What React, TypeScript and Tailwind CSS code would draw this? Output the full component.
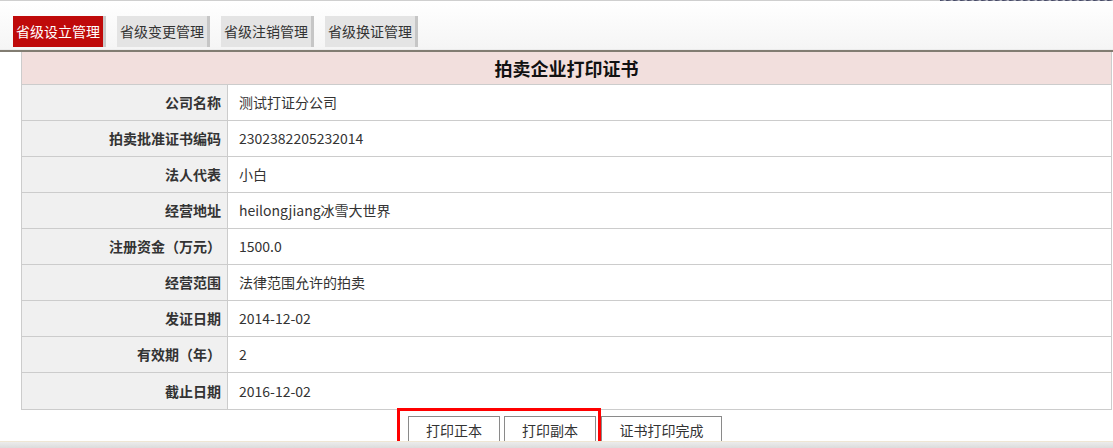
const tabs = ['省级设立管理', '省级变更管理', '省级注销管理', '省级换证管理'];

const rows: [string, string][] = [
  ['公司名称', '测试打证分公司'],
  ['拍卖批准证书编码', '2302382205232014'],
  ['法人代表', '小白'],
  ['经营地址', 'heilongjiang冰雪大世界'],
  ['注册资金（万元）', '1500.0'],
  ['经营范围', '法律范围允许的拍卖'],
  ['发证日期', '2014-12-02'],
  ['有效期（年）', '2'],
  ['截止日期', '2016-12-02'],
];

export default function App() {
  return (
    <div className="w-[1113px] h-[448px] overflow-hidden bg-white text-[#333] font-['Microsoft_YaHei','Noto_Sans_CJK_SC',sans-serif]">
      <div className="h-[441px] overflow-hidden relative">
        {/* top strip */}
        <div className="flex h-px">
          <div className="w-[940px] bg-[#cfcfcf]" />
          <div className="flex-1 bg-[repeating-linear-gradient(90deg,#3d4160_0px,#6b6e84_3px,#c9cad3_5px,#2f3350_7px)]" />
        </div>

        {/* tabs */}
        <div className="h-[49px] bg-gradient-to-b from-white to-[#f5f5f5] border-b border-[#ececec] flex gap-[11px] pl-[13px] pt-[15px]">
          {tabs.map((t, i) => (
            <div
              key={t}
              className={
                'h-[31px] w-[93px] flex items-center pl-[3px] text-[14px] border-r-[3px] ' +
                (i === 0
                  ? 'bg-[#bf0a0a] text-white border-[#cacaca]'
                  : 'bg-[#e4e4e4] text-[#333] border-[#c6c6c6]')
              }
            >
              {t}
            </div>
          ))}
        </div>
        <div className="h-[2px] bg-[#827d72]" />

        {/* table */}
        <div className="ml-[21px] w-[1091px] border-x border-b border-[#cccccc]">
          <div className="h-[33px] bg-[#f2dfdd] border-b border-[#cccccc] flex items-center justify-center text-[18px] font-bold text-[#111]">
            拍卖企业打印证书
          </div>
          {rows.map(([label, value], i) => (
            <div
              key={label}
              className={'flex h-[36px] ' + (i < rows.length - 1 ? 'border-b border-[#cccccc]' : '')}
            >
              <div className="w-[206px] shrink-0 bg-[#f0f0f0] border-r border-[#cccccc] flex items-center justify-end pr-[6px] text-[14px] font-bold text-[#333]">
                {label}
              </div>
              <div className="flex items-center pl-[11px] text-[14px] text-[#333]">{value}</div>
            </div>
          ))}
        </div>

        {/* buttons */}
        <div className="flex justify-center gap-[4px] mt-[6px] pl-[17px]">
          <button className="w-[92px] h-[30px] border border-[#8a8a8a] bg-white text-[14px] text-[#333] pb-[2px]">
            打印正本
          </button>
          <button className="w-[92px] h-[30px] border border-[#8a8a8a] bg-white text-[14px] text-[#333] pb-[2px]">
            打印副本
          </button>
          <button className="ml-[1px] w-[121px] h-[30px] border border-[#8a8a8a] bg-white text-[14px] text-[#333] pb-[2px]">
            证书打印完成
          </button>
        </div>

        {/* annotation box */}
        <div className="absolute left-[397px] top-[408px] w-[204px] h-[40px] border-[3px] border-[#ff0000]" />
      </div>

      {/* bottom bar */}
      <div className="h-px bg-[#efe6d4]" />
      <div className="h-[6px] bg-gradient-to-b from-[#ececec] to-[#dcdcdc]" />
    </div>
  );
}
